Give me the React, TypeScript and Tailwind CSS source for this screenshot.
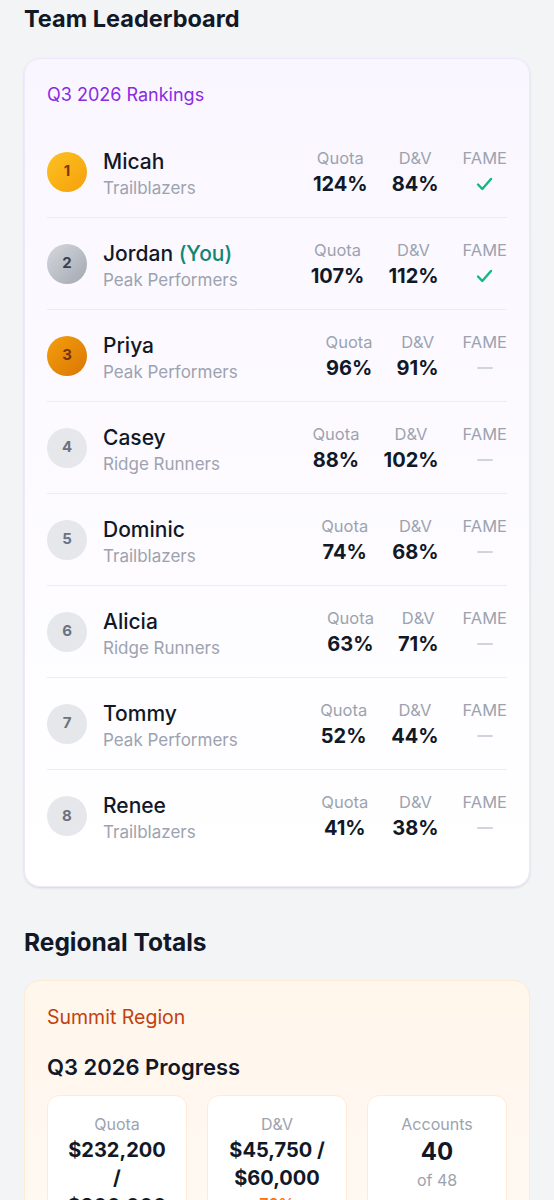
import React from "react";

type Row = {
  rank: number;
  name: string;
  you?: boolean;
  team: string;
  quota: string;
  dv: string;
  fame: boolean;
};

const rows: Row[] = [
  { rank: 1, name: "Micah", team: "Trailblazers", quota: "124%", dv: "84%", fame: true },
  { rank: 2, name: "Jordan", you: true, team: "Peak Performers", quota: "107%", dv: "112%", fame: true },
  { rank: 3, name: "Priya", team: "Peak Performers", quota: "96%", dv: "91%", fame: false },
  { rank: 4, name: "Casey", team: "Ridge Runners", quota: "88%", dv: "102%", fame: false },
  { rank: 5, name: "Dominic", team: "Trailblazers", quota: "74%", dv: "68%", fame: false },
  { rank: 6, name: "Alicia", team: "Ridge Runners", quota: "63%", dv: "71%", fame: false },
  { rank: 7, name: "Tommy", team: "Peak Performers", quota: "52%", dv: "44%", fame: false },
  { rank: 8, name: "Renee", team: "Trailblazers", quota: "41%", dv: "38%", fame: false },
];

function Badge({ rank }: { rank: number }) {
  let cls = "bg-[#e5e7eb] text-[#6b7280]";
  if (rank === 1) cls = "bg-linear-to-br from-[#fcc21f] to-[#f5a00b] text-[#7a3a0c]";
  if (rank === 2) cls = "bg-linear-to-br from-[#d5d8dd] to-[#a3a8b1] text-[#374151]";
  if (rank === 3) cls = "bg-linear-to-br from-[#f59e0b] to-[#d97706] text-[#78350f]";
  return (
    <div className={`w-10 h-10 shrink-0 rounded-full flex items-center justify-center text-[15px] font-bold ${cls}`}>
      {rank}
    </div>
  );
}

function Check() {
  return (
    <svg width="17" height="16" viewBox="0 0 17 16" fill="none" className="text-[#10b981]">
      <polyline points="2,8.5 6.3,13 15,3" stroke="currentColor" strokeWidth="2.4" strokeLinecap="round" strokeLinejoin="round" />
    </svg>
  );
}

function Stat({ label, children }: { label: string; children: React.ReactNode }) {
  return (
    <div className="flex flex-col items-center text-center">
      <div className="text-[16.5px] leading-6 text-[#9ca3af]">{label}</div>
      <div className="h-7 flex items-center justify-center text-[20px] leading-7 font-bold text-[#111827]">{children}</div>
    </div>
  );
}

export default function App() {
  return (
    <div
      className="min-h-screen bg-[#f3f4f6] px-6 pt-[3px] pb-10"
      style={{ fontFamily: "Inter, 'Noto Sans', 'Liberation Sans', sans-serif" }}
    >
      <h1 className="text-[23.5px] leading-8 font-bold text-[#111827] mb-[23px]">Team Leaderboard</h1>

      <div className="rounded-2xl border border-[#efe7fd] bg-linear-to-b from-[#faf6ff] to-white p-[22px] pb-6 shadow-sm">
        <div className="text-lg leading-7 text-[#8a2be2] mb-[17px]">Q3 2026 Rankings</div>
        <div>
          {rows.map((r, i) => (
            <div
              key={r.rank}
              className={`h-[92px] flex items-center gap-4 ${i < rows.length - 1 ? "border-b border-[#f0e8fb]" : ""}`}
            >
              <Badge rank={r.rank} />
              <div className="flex-1 min-w-0 pt-1">
                <div className="text-[21px] leading-7 font-medium text-[#111827]">
                  {r.name}
                  {r.you && <span className="text-[#128672]"> (You)</span>}
                </div>
                <div className="text-[17px] leading-6 text-[#9ca3af]">{r.team}</div>
              </div>
              <div className="flex gap-6">
                <Stat label="Quota">{r.quota}</Stat>
                <Stat label="D&V">{r.dv}</Stat>
                <Stat label="FAME">
                  {r.fame ? <Check /> : <span className="block w-4 h-[2px] bg-[#d1d5db] rounded" />}
                </Stat>
              </div>
            </div>
          ))}
        </div>
      </div>

      <h2 className="text-[24.5px] leading-8 font-bold text-[#111827] mt-[39px] mb-[22px]">Regional Totals</h2>

      <div className="rounded-2xl border border-[#fdebd3] bg-linear-to-b from-[#fff6ec] to-[#fffaf4] p-[22px]">
        <div className="text-[19.5px] leading-7 text-[#c2410c]">Summit Region</div>
        <div className="mt-5 text-[22px] leading-8 font-semibold text-[#111827]">Q3 2026 Progress</div>
        <div className="mt-3 grid grid-cols-3 gap-5">
          <div className="rounded-xl border border-[#fdebd3] bg-white px-4 py-4 text-center">
            <div className="text-base leading-6 text-[#9ca3af]">Quota</div>
            <div className="text-xl leading-7 font-bold text-[#111827]">$232,200 / $300,000</div>
            <div className="text-base leading-6 font-semibold text-[#f97316]">77%</div>
          </div>
          <div className="rounded-xl border border-[#fdebd3] bg-white px-4 py-4 text-center">
            <div className="text-base leading-6 text-[#9ca3af]">D&amp;V</div>
            <div className="text-xl leading-7 font-bold text-[#111827]">$45,750 / $60,000</div>
            <div className="text-base leading-6 font-semibold text-[#f97316]">76%</div>
          </div>
          <div className="rounded-xl border border-[#fdebd3] bg-white px-4 py-4 text-center">
            <div className="text-base leading-6 text-[#9ca3af]">Accounts</div>
            <div className="text-2xl leading-8 font-bold text-[#111827]">40</div>
            <div className="text-base leading-6 text-[#9ca3af]">of 48</div>
          </div>
        </div>
      </div>
    </div>
  );
}
